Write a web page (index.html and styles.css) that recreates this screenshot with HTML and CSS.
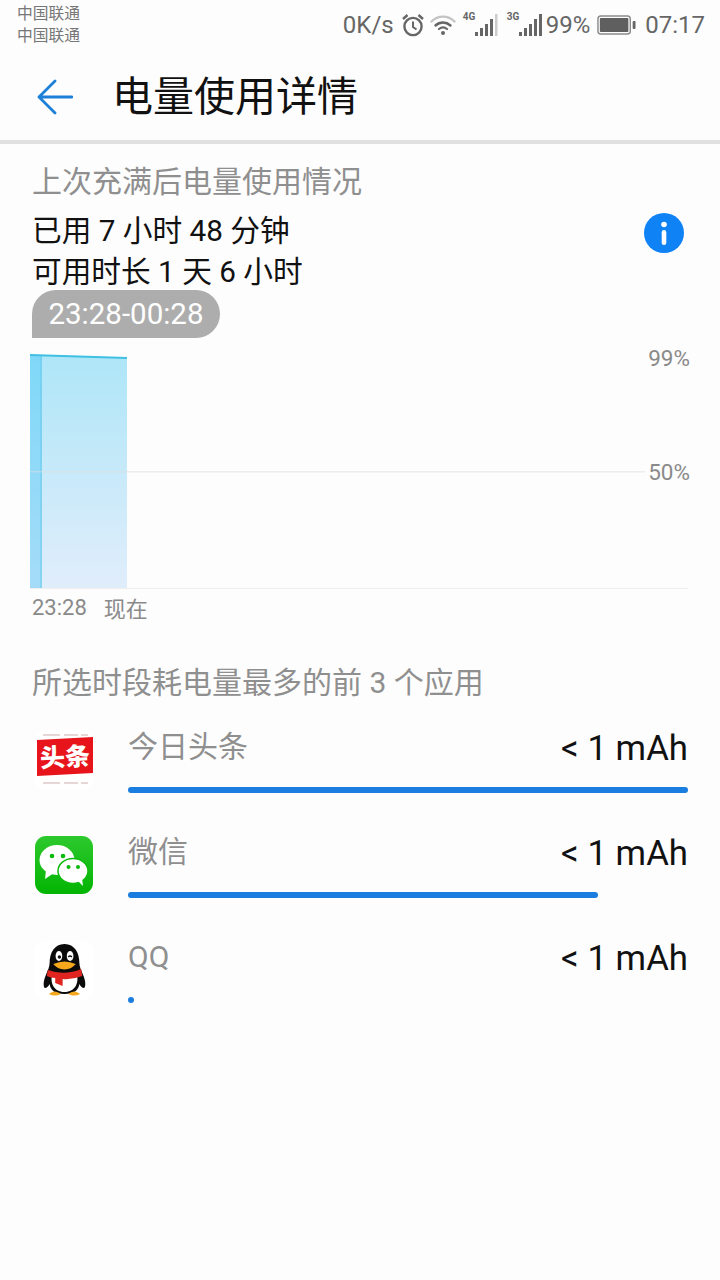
FILE: index.html
```html
<!DOCTYPE html>
<html lang="zh">
<head>
<meta charset="utf-8">
<title>电量使用详情</title>
<link rel="stylesheet" href="styles.css">
</head>
<body>
<div class="status">
  <div class="carriers"><div>中国联通</div><div>中国联通</div></div>
  <div class="status-right">
    <span>0K/s</span>
    <svg class="ic-alarm" width="24" height="24" viewBox="0 0 24 24" fill="none" stroke="#666" stroke-width="2.4"><circle cx="12" cy="13.5" r="8.6"/><path d="M12 8.5v5.5l3.5 2.5" stroke-width="2"/><path d="M2 6l4.5-4M22 6l-4.5-4" stroke-width="2.4"/></svg>
    <svg class="ic-wifi" width="26" height="22" viewBox="0 0 26 22" fill="none" stroke-linecap="round"><path d="M1.5 7.5C8 1 18 1 24.500 7.500" stroke="#c4c4c4" stroke-width="2.4"/><path d="M5.500 11.500C10 7.500 16 7.500 20.500 11.500" stroke="#666" stroke-width="2.4"/><path d="M9 15c2.500-2 5.500-2 8 0" stroke="#666" stroke-width="2.2"/><circle cx="13" cy="19" r="2" fill="#666"/></svg>
    <span class="sig">
      <span class="net">4G</span>
      <svg width="24" height="24" viewBox="0 0 24 24"><g fill="#666"><rect x="1" y="19" width="3" height="4"/><rect x="6" y="15" width="3" height="8"/><rect x="11" y="11" width="3" height="12"/><rect x="16" y="6" width="3" height="17"/></g><rect x="21" y="1" width="2.500" height="22" fill="#ccc"/></svg>
    </span>
    <span class="sig">
      <span class="net">3G</span>
      <svg width="24" height="24" viewBox="0 0 24 24" fill="#666"><rect x="1" y="19" width="3" height="4"/><rect x="6" y="15" width="3" height="8"/><rect x="11" y="11" width="3" height="12"/><rect x="16" y="6" width="3" height="17"/><rect x="21" y="1" width="3" height="22"/></svg>
    </span>
    <span class="pct">99%</span>
    <svg class="ic-batt" width="39" height="20" viewBox="0 0 41 20" preserveAspectRatio="none"><rect x="1" y="1" width="34" height="18" rx="3" fill="none" stroke="#8a8a8a" stroke-width="1.500"/><rect x="3" y="3" width="30" height="14" rx="1" fill="#5f5f5f"/><rect x="37.500" y="6" width="3" height="8" rx="1" fill="#666"/></svg>
    <span class="clock">07:17</span>
  </div>
</div>

<header class="toolbar">
  <svg class="back" width="36" height="36" viewBox="0 0 36 36" fill="none" stroke="#1c7fd8" stroke-width="2.800" stroke-linecap="round" stroke-linejoin="round"><path d="M35 18H2M18 2L2 18l16 16"/></svg>
  <h1>电量使用详情</h1>
</header>

<main class="content">
  <div class="muted since">上次充满后电量使用情况</div>
  <div class="usage">
    <div class="usage-text">
      <div>已用 7 小时 48 分钟</div>
      <div>可用时长 1 天 6 小时</div>
    </div>
    <svg class="info" width="40" height="40" viewBox="0 0 40 40"><circle cx="20" cy="20" r="20" fill="#0f82f5"/><circle cx="20" cy="11.500" r="2.800" fill="#fff"/><rect x="17.700" y="17" width="4.600" height="15" rx="2.300" fill="#fff"/></svg>
  </div>
  <div class="pill">23:28-00:28</div>

  <div class="chart">
    <svg class="plot" width="688" height="240" viewBox="0 0 688 240">
      <defs>
        <linearGradient id="fill" x1="0" y1="0" x2="0" y2="1"><stop offset="0" stop-color="#aee6f8"/><stop offset="1" stop-color="#e0edfb"/></linearGradient>
        <linearGradient id="edge" x1="0" y1="0" x2="0" y2="1"><stop offset="0" stop-color="#7fd8f8"/><stop offset="1" stop-color="#a4dcf8"/></linearGradient>
      </defs>
      <path d="M10 5L97 8V238H10Z" fill="url(#fill)"/>
      <rect x="0" y="5" width="12" height="233" fill="url(#edge)"/>
      <rect x="10.500" y="5" width="1" height="233" fill="#6cc9ec"/>
      <path d="M0 5L97 8" stroke="#3fc0e2" stroke-width="2" fill="none"/>
      <rect x="0" y="121" width="615" height="1.500" fill="#dddddd" opacity="0.5"/>
      <rect x="0" y="238" width="658" height="1" fill="#eeeeee"/>
    </svg>
    <span class="pct-label top">99%</span>
    <span class="pct-label mid">50%</span>
  </div>
  <div class="times"><span>23:28</span><span class="now">现在</span></div>

  <div class="muted apps-title">所选时段耗电量最多的前 3 个应用</div>

  <div class="app">
    <svg class="app-icon" width="60" height="60" viewBox="0 0 60 60">
      <rect width="60" height="60" rx="12" fill="#fff"/>
      <path d="M9 5h17M30 5h14M47 5h7M9 53h17M30 53h14M47 53h7" stroke="#e6d6d6" stroke-width="2"/>
      <path d="M3 10L59 7V43L3 46Z" fill="#e8141c"/>
      <text class="tt" x="31" y="36" transform="rotate(-3 31 27)">头条</text>
    </svg>
    <div class="app-body">
      <div class="app-line"><span class="app-name">今日头条</span><span class="app-val">&lt; 1 mAh</span></div>
      <div class="bar bar-full"></div>
    </div>
  </div>
  <div class="app">
    <svg class="app-icon" width="60" height="60" viewBox="0 0 60 60">
      <defs><linearGradient id="wx" x1="0" y1="0" x2="0" y2="1"><stop offset="0" stop-color="#2dc92d"/><stop offset="1" stop-color="#03b403"/></linearGradient></defs>
      <rect x="1" y="1" width="58" height="58" rx="11" fill="url(#wx)"/>
      <ellipse cx="23" cy="25" rx="17.500" ry="15" fill="#fff"/>
      <path d="M12 35l-1 9 9-6Z" fill="#fff"/>
      <circle cx="18" cy="21" r="2.300" fill="#0aba0a"/><circle cx="29" cy="21" r="2.300" fill="#0aba0a"/>
      <ellipse cx="39" cy="36" rx="15" ry="12.500" fill="#fff" stroke="#0dbb0d" stroke-width="1.500"/>
      <path d="M44 46l5 5-1-8Z" fill="#fff"/>
      <circle cx="34.500" cy="32" r="2" fill="#0aba0a"/><circle cx="44" cy="32" r="2" fill="#0aba0a"/>
    </svg>
    <div class="app-body">
      <div class="app-line"><span class="app-name">微信</span><span class="app-val">&lt; 1 mAh</span></div>
      <div class="bar bar-mid"></div>
    </div>
  </div>
  <div class="app">
    <svg class="app-icon" width="60" height="60" viewBox="0 0 60 60">
      <rect width="60" height="60" rx="12" fill="#fff"/>
      <g transform="translate(2.600 0) scale(.93 1)">
        <path d="M30 4C19 4 14 13 14 23C14 27 12 30 10 35C7 41 7 47 9 48C11 48 13 46 14 44C15 50 19 54 30 54C41 54 45 50 46 44C47 46 49 48 51 48C53 47 53 41 50 35C48 30 46 27 46 23C46 13 41 4 30 4Z" fill="#0b0b0b"/>
        <path d="M17 33C22 37 38 37 43 33C46 42 42 52 30 52C18 52 14 42 17 33Z" fill="#fff"/>
        <ellipse cx="24" cy="16" rx="3.600" ry="5" fill="#fff"/><ellipse cx="36" cy="16" rx="3.600" ry="5" fill="#fff"/>
        <circle cx="24.500" cy="17" r="1.800" fill="#111"/><path d="M34 17q2-2 4 0" stroke="#111" stroke-width="1.400" fill="none"/>
        <path d="M18 24Q30 19 42 24Q38 29 30 29.500Q22 29 18 24Z" fill="#f5a81c"/>
        <path d="M12 30Q30 36 48 29L49 36Q38 40 28 39V46L20 43V38Q15 38 11 36Z" fill="#e0241f"/>
        <path d="M13 54Q20 49 26 54Q20 57 13 54ZM34 54Q40 49 47 54Q40 57 34 54Z" fill="#f5a81c"/>
      </g>
    </svg>
    <div class="app-body">
      <div class="app-line"><span class="app-name">QQ</span><span class="app-val">&lt; 1 mAh</span></div>
      <div class="bar bar-dot"></div>
    </div>
  </div>
</main>
</body>
</html>
```
FILE: styles.css
```css
* { box-sizing: border-box; }
html, body { margin: 0; padding: 0; }
body {
  width: 720px;
  height: 1280px;
  overflow: hidden;
  background: #fdfdfd;
  color: #111;
  font-family: Roboto, "Noto Sans CJK SC", sans-serif;
}
.status {
  height: 50px;
  padding: 3px 15px 0 17px;
  display: flex;
  justify-content: space-between;
  color: #666;
}
.carriers { font-size: 15.75px; line-height: 22px; color: #777; }
.status-right {
  display: flex;
  align-items: center;
  height: 44px;
  font-size: 24px;
}
.ic-alarm { margin-left: 7px; }
.ic-wifi { margin-left: 5px; }
.sig { display: flex; align-items: flex-end; position: relative; width: 34px; margin-left: 8px; justify-content: flex-end; height: 24px; }
.sig + .sig { margin-left: 10px; }
.net { position: absolute; left: -1px; top: -2px; font-size: 10px; font-weight: 700; line-height: 12px; color: #666; }
.pct { margin-left: 4px; }
.ic-batt { margin-left: 7px; }
.clock { margin-left: 9px; }
.toolbar {
  height: 94px;
  padding: 4px 0 0 37px;
  display: flex;
  align-items: center;
  border-bottom: 4px solid #e0e0e0;
}
.back { flex: none; }
h1 {
  margin: 0 0 0 39px;
  font-size: 41px;
  font-weight: 400;
  line-height: 56px;
  color: #111;
}
.content { padding: 16px 32px 0; }
.muted { color: #8f8f8f; font-size: 30px; line-height: 44px; }
.usage { display: flex; justify-content: space-between; align-items: flex-start; }
.usage-text { font-size: 29.700px; line-height: 41px; padding-top: 6px; color: #111; }
.info { flex: none; margin-top: 9px; margin-right: 4px; }
.pill {
  width: 188px;
  height: 48px;
  margin-top: -2px;
  background: #adadad;
  color: #fff;
  border-radius: 24px 24px 24px 0;
  font-size: 29.500px;
  line-height: 48px;
  text-align: center;
}
.chart {
  position: relative;
  height: 240px;
  margin-top: 12px;
  margin-left: -2px;
}
.plot { display: block; }
.pct-label { position: absolute; font-size: 22.500px; line-height: 26px; color: #8a8a8a; left: 618px; text-align: right; width: 42px; white-space: nowrap; }
.top { top: -5px; }
.mid { top: 109px; }
.times { display: flex; align-items: center; height: 34px; font-size: 22px; color: #8a8a8a; }
.now { margin-left: 17px; font-size: 22px; }
.apps-title { margin-top: 37px; margin-bottom: 6px; }
.app { display: flex; height: 105px; }
.app-icon { flex: none; margin: 19px 0 0 2px; }
.app-body { flex: 1; margin-left: 34px; }
.app-line { display: flex; justify-content: space-between; align-items: flex-end; height: 58px; }
.app-name { font-size: 30px; line-height: 44px; color: #8f8f8f; }
.app-val { font-size: 34.800px; line-height: 42px; color: #111; }
.bar { height: 6px; margin-top: 18px; background: #1a7de0; border-radius: 3px; }
.bar-full { width: 560px; }
.bar-mid { width: 470px; }
.bar-dot { width: 6px; }
.tt { font-family: "Noto Sans CJK SC", sans-serif; font-size: 25px; font-weight: 900; fill: #fff; text-anchor: middle; }
```
